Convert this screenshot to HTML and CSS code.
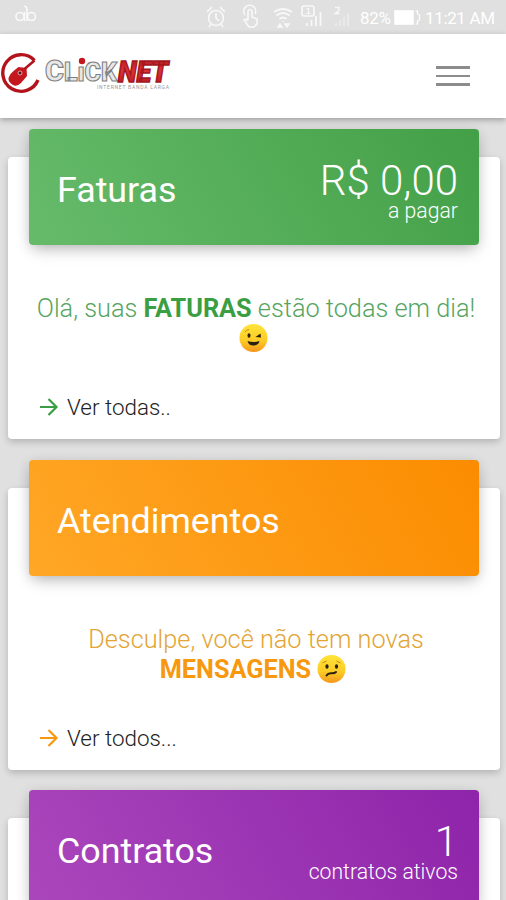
FILE: index.html
```html
<!DOCTYPE html>
<html lang="pt-BR">
<head>
    <meta charset="UTF-8">
    <meta name="viewport" content="width=device-width, initial-scale=1.0">
    <title>ClickNet</title>
    <link rel="stylesheet" href="styles.css">
</head>
<body>
    <div class="statusbar">
        <svg class="status-icons" viewBox="0 0 506 34" fill="none" stroke="#fff" stroke-width="1.6">
            <!-- app badge -->
            <g opacity=".85">
                <circle cx="20" cy="16.5" r="4"/>
                <circle cx="31.500" cy="16.5" r="4"/>
                <path d="M24.500 21V12M27 21V9q0-2-2.500-3"/>
            </g>
            <g opacity=".8">
                <!-- alarm -->
                <circle cx="216" cy="18" r="7.500"/>
                <path d="M216 13v5l3 3M207 12l5-5M225 12l-5-5M211 24l-2 3M221 24l2 3"/>
                <!-- touch -->
                <path d="M245 15a6 6 0 1 1 10-1M248 20v-9q2-3 4 0v6l5 2v5l-3 3h-5l-5-7 2-1 2 2"/>
                <!-- wifi -->
                <path d="M274 12q9-6 18 0M276.500 15.500q6.500-5 13 0M279.500 19q3.500-3 7 0" stroke-width="2"/>
                <path d="M283 21v1M278 27l2-3 2 3zM285 24l2 3 2-3z" stroke-width="1.500"/>
                <!-- sim 1 -->
                <rect x="302" y="6" width="12" height="10" rx="2"/>
                <path d="M306.500 8.500h2v5m-2 0h4" stroke-width="1.200"/>
                <path d="M307 26v-3M311.500 26v-6M316 26v-10M320.500 26V12" stroke-width="1.800"/>
                <!-- sim 2 -->
                <path d="M335 7.500h4v3l-4 3h4.500" stroke-width="1.300"/>
                <path d="M336 26v-3M340 26v-6M344 26v-9M348 26V13" stroke-width="1.400" opacity=".6"/>
            </g>
            <!-- battery -->
            <rect x="395" y="11" width="18" height="13" fill="#fff"/>
            <path d="M415.500 11h2v3l2 1v5l-2 1v3h-2" stroke-width="1.200"/>
            <g class="status-text">
                <text x="360" y="24" textLength="31">82%</text>
                <text x="425" y="24" textLength="70">11:21 AM</text>
            </g>
        </svg>
    </div>

    <header class="navbar">
        <svg class="logo" viewBox="0 0 172 44">
            <defs>
                <linearGradient id="red" x1="0" y1="0" x2="0" y2="1">
                    <stop offset="0" stop-color="#a3161c"/>
                    <stop offset=".5" stop-color="#dd3038"/>
                    <stop offset="1" stop-color="#ad141b"/>
                </linearGradient>
            </defs>
            <g class="logo-mouse">
                <path d="M36 8.500A18.300 18.300 0 1 0 39.500 28" fill="none" stroke="#b3141c" stroke-width="3.400"/>
                <path d="M10 26q1-4 5-7l5-4 8 1 .5 8-6 7q-4 4-8 2-5-3-4.500-7z" fill="#c4181f"/>
                <path d="M26 17l10-8.500" stroke="#b3141c" stroke-width="2.500"/>
                <circle cx="21.500" cy="21" r="2" fill="#5b1012" stroke="#e9a0a0" stroke-width="1"/>
            </g>
            <text class="logo-click" x="45" y="30" textLength="72" lengthAdjust="spacingAndGlyphs"><tspan font-size="30">C</tspan><tspan font-size="26">LıCK</tspan></text>
            <circle cx="82" cy="10" r="3.200" fill="#c4181f"/>
            <text class="logo-net" x="118" y="30.500" textLength="50" lengthAdjust="spacingAndGlyphs">NET</text>
            <text class="logo-tag" x="97" y="37.500" textLength="72">INTERNET  BANDA LARGA</text>
        </svg>
        <button class="menu" aria-label="Menu">
            <span></span>
            <span></span>
            <span></span>
        </button>
    </header>

    <main>
        <section class="card green">
            <div class="card-header">
                <h2>Faturas</h2>
                <div class="total">
                    <strong>R$ 0,00</strong>
                    <small>a pagar</small>
                </div>
            </div>
            <p class="message">Olá, suas <b>FATURAS</b> estão todas em dia!
                <svg class="emoji" viewBox="0 0 28 28">
                    <defs>
                        <linearGradient id="face" x1="0" y1="0" x2="0" y2="1">
                            <stop offset="0" stop-color="#ffe43a"/>
                            <stop offset=".6" stop-color="#fdcb25"/>
                            <stop offset="1" stop-color="#f5961c"/>
                        </linearGradient>
                    </defs>
                    <circle cx="14" cy="14" r="14" fill="url(#face)"/>
                    <path d="M5.500 8q1-2 4-2.500" fill="none" stroke="#c98a12" stroke-width="1"/>
                    <ellipse cx="9.500" cy="11.500" rx="1.500" ry="2.200" fill="#2b2012"/>
                    <path d="M16 13l5-3.500 .5 4z" fill="#2b2012"/>
                    <path d="M8 17q6 2 12 0-1 4.500-6 4.500t-6-4.500z" fill="#2b2012"/>
                </svg>
            </p>
            <a class="more" href="#">
                <svg viewBox="0 0 20 20"><path d="M1 10h16M9.500 2l8 8-8 8"/></svg>
                <span>Ver todas..</span>
            </a>
        </section>

        <section class="card orange">
            <div class="card-header">
                <h2>Atendimentos</h2>
            </div>
            <p class="message">Desculpe, você não tem novas <b>MENSAGENS</b>
                <svg class="emoji" viewBox="0 0 28 28">
                    <circle cx="14" cy="14" r="14" fill="url(#face)"/>
                    <path d="M5 8l4-2M19 6l4 2" fill="none" stroke="#c98a12" stroke-width="1"/>
                    <ellipse cx="9.500" cy="11.500" rx="1.600" ry="2.300" fill="#2b2012"/>
                    <ellipse cx="19" cy="11.500" rx="1.600" ry="2.300" fill="#2b2012"/>
                    <path d="M9 20.500q1.500-2.500 5-2.200 3 .2 4.500-1.300" fill="none" stroke="#2b2012" stroke-width="2" stroke-linecap="round"/>
                </svg>
            </p>
            <a class="more" href="#">
                <svg viewBox="0 0 20 20"><path d="M1 10h16M9.500 2l8 8-8 8"/></svg>
                <span>Ver todos...</span>
            </a>
        </section>

        <section class="card purple">
            <div class="card-header">
                <h2>Contratos</h2>
                <div class="total">
                    <strong>1</strong>
                    <small>contratos ativos</small>
                </div>
            </div>
        </section>
    </main>
</body>
</html>
```
FILE: styles.css
```css
* {
    box-sizing: border-box;
}

body {
    margin: 0;
    height: 900px;
    overflow: hidden;
    background-color: #e0e0e0;
    font-family: Roboto, sans-serif;
    font-weight: 300;
}

.statusbar {
    height: 34px;
}

.status-icons {
    display: block;
    width: 506px;
    height: 34px;
}

.status-text {
    fill: #fff;
    stroke: none;
    font-size: 17px;
    font-weight: 400;
}

.navbar {
    display: flex;
    justify-content: space-between;
    align-items: flex-start;
    height: 84px;
    padding: 17px 36px 0 0;
    background-color: #fff;
    box-shadow: 0 2px 6px rgba(0, 0, 0, 0.3);
}

.logo {
    width: 172px;
    height: 44px;
}

.logo-mouse {
    transform: translate(-1.5px, 1px);
}

.logo-click {
    fill: #e8e8e8;
    stroke: #808080;
    stroke-width: 1.1px;
    font-weight: 900;
}

.logo-net {
    fill: url(#red);
    stroke: #a3161c;
    stroke-width: 1.5px;
    font-size: 30px;
    font-weight: 900;
    font-style: italic;
}

.logo-tag {
    fill: #999;
    font-size: 5px;
    font-weight: 400;
}

.menu {
    display: flex;
    flex-direction: column;
    gap: 6px;
    margin-top: 15px;
    padding: 0;
    border: none;
    background: none;
}

.menu span {
    width: 34px;
    height: 2.5px;
    background-color: #8c8c8c;
}

main {
    height: 782px;
    padding: 39px 6px 0 8px;
    overflow: hidden;
}

.card {
    display: flow-root;
    height: 282px;
    margin-bottom: 48.5px;
    padding: 0 21px;
    background-color: #fff;
    border-radius: 4px;
    box-shadow: 0 3px 7px rgba(0, 0, 0, 0.2);
}

.card-header {
    display: flex;
    justify-content: space-between;
    align-items: center;
    height: 116px;
    margin-top: -28px;
    padding: 0 21px 0 28px;
    border-radius: 4px;
    color: #fff;
    box-shadow: 0 7px 16px -4px rgba(0, 0, 0, 0.25), 0 2px 12px rgba(0, 0, 0, 0.1);
}

.card-header h2 {
    margin: 6px 0 0;
    font-size: 35.8px;
    font-weight: 400;
    line-height: 42px;
}

.total {
    display: flex;
    flex-direction: column;
    align-items: flex-end;
    padding-top: 10px;
}

.total strong {
    font-size: 42px;
    font-weight: 300;
    line-height: 37px;
}

.total small {
    font-size: 21.2px;
    line-height: 24px;
}

.message {
    height: 60px;
    margin: 49px -1px 0 -3px;
    font-size: 25.3px;
    line-height: 30px;
    text-align: center;
    text-indent: 6px;
}

.message b {
    font-weight: 700;
}

.emoji {
    width: 29px;
    height: 28px;
    vertical-align: -5px;
}

.more {
    display: flex;
    align-items: center;
    gap: 8px;
    margin-top: 39px;
    padding-left: 10px;
    color: #222;
    font-size: 22.4px;
    line-height: 28px;
    text-decoration: none;
}

.more svg {
    width: 20px;
    height: 20px;
    fill: none;
    stroke: currentColor;
    stroke-width: 2.2;
}

.green .card-header {
    background: linear-gradient(60deg, #66bb6a, #43a047);
}

.green .message {
    color: #56a55f;
}

.green .message b,
.green .more svg {
    color: #3a9e42;
}

.orange .card-header {
    background: linear-gradient(60deg, #ffa726, #fb8c00);
}

.orange .message {
    color: #e3a536;
}

.orange .message b,
.orange .more svg {
    color: #f7980e;
}

.purple .card-header {
    background: linear-gradient(60deg, #ab47bc, #8e24aa);
}
```
